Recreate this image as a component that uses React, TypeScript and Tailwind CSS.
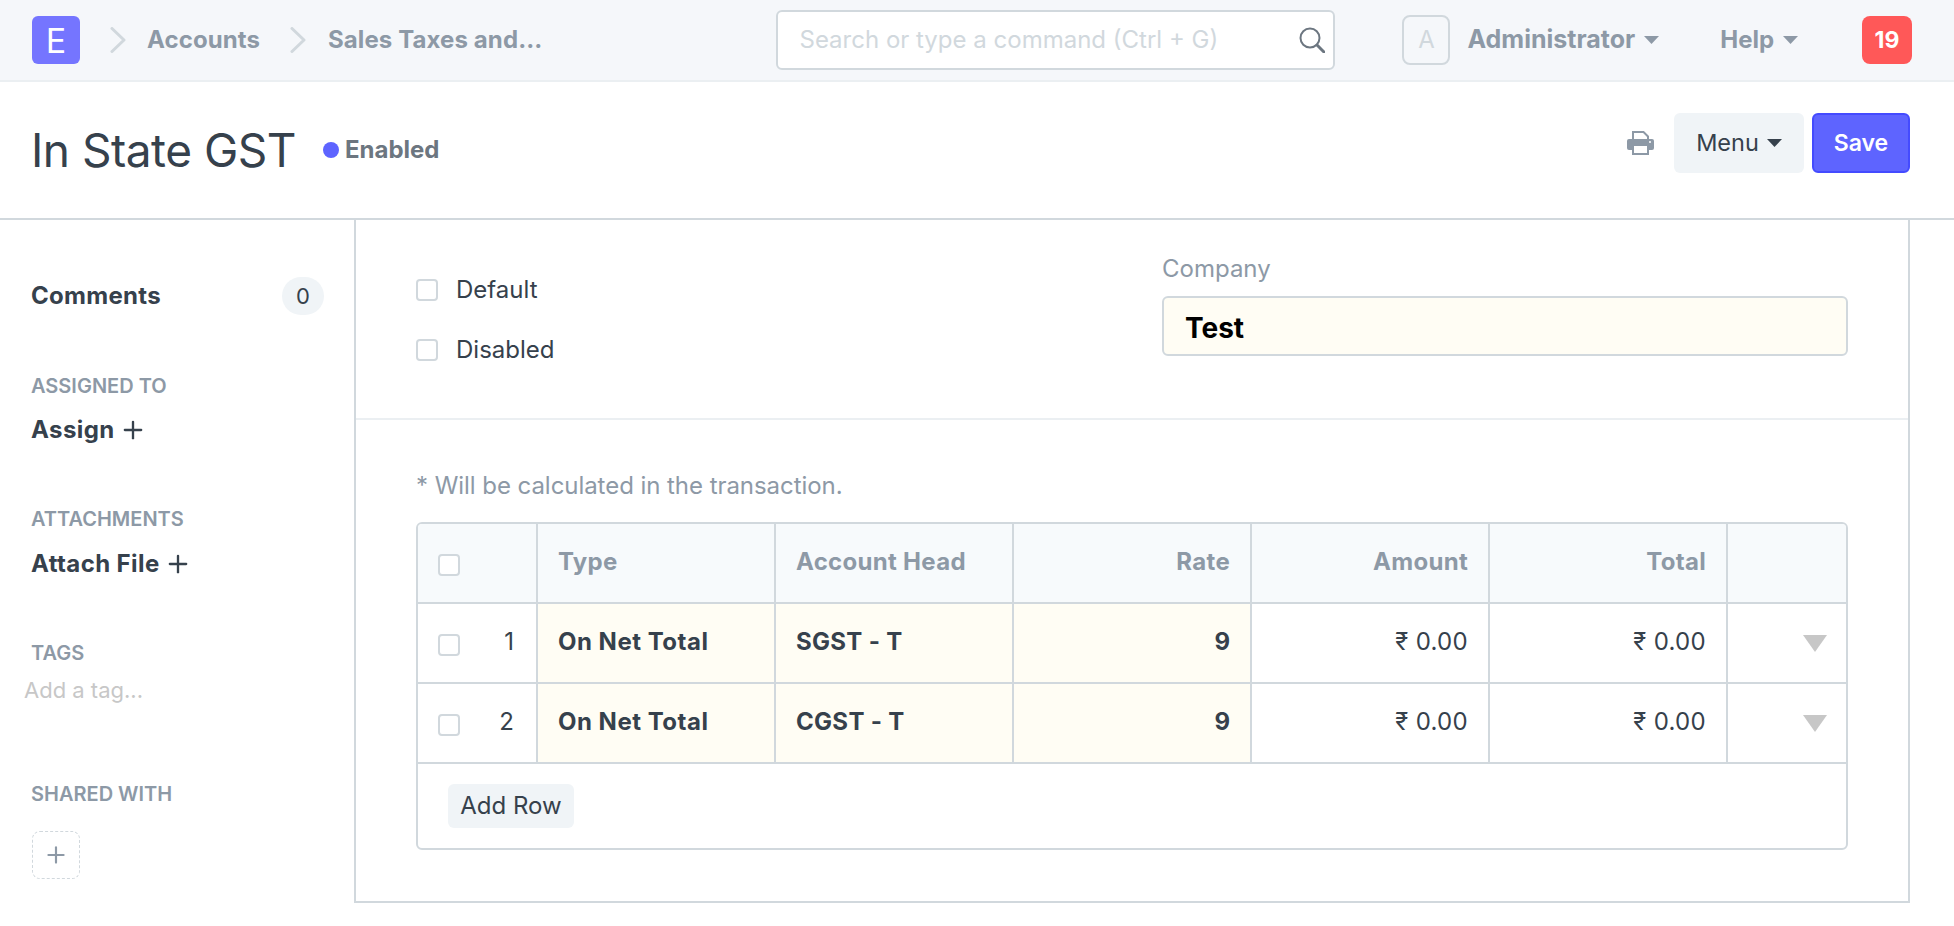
import React from 'react';
import { Plus } from 'lucide-react';

const Chevron = () => (
  <svg width="16" height="26" viewBox="0 0 16 26" fill="none" className="shrink-0">
    <path d="M2 1.5 L14 13 L2 24.5" stroke="#d1d8dd" strokeWidth="3" strokeLinecap="round" strokeLinejoin="round" />
  </svg>
);

const Caret = ({ className }: { className: string }) => (
  <svg width="15" height="8" viewBox="0 0 15 8" className={className}>
    <path d="M0 0 H15 L7.5 8 Z" fill="currentColor" />
  </svg>
);

const SearchIcon = () => (
  <svg width="26" height="26" viewBox="0 0 26 26" fill="none" className="shrink-0">
    <circle cx="11" cy="11" r="9.5" stroke="#6c7680" strokeWidth="2" />
    <path d="M18 18 L25 25" stroke="#6c7680" strokeWidth="3" strokeLinecap="round" />
  </svg>
);

const PrintIcon = () => (
  <svg width="27" height="24" viewBox="0 0 27 24" className="shrink-0 ml-auto">
    <path d="M6 10 V1 H16.5 L21 5.5 V10" fill="#fff" stroke="#8d99a6" strokeWidth="2" />
    <rect x="0" y="8" width="27" height="11" rx="2" fill="#8d99a6" />
    <rect x="6" y="14" width="15" height="9" fill="#fff" stroke="#8d99a6" strokeWidth="2" />
    <circle cx="23" cy="11" r="1" fill="#fff" />
  </svg>
);

const Checkbox = ({ className = '' }: { className?: string }) => (
  <span className={`block w-[22px] h-[22px] rounded-[4px] border-2 border-[#d1d8dd] bg-white shrink-0 ${className}`} />
);

const SideLabel = ({ children, className = '' }: { children: React.ReactNode; className?: string }) => (
  <div className={`-ml-px text-[20px] leading-[24px] font-semibold text-[#8d99a6] ${className}`}>{children}</div>
);

const SideAction = ({ label, className = '' }: { label: string; className?: string }) => (
  <div className={`-ml-px flex items-center gap-[4px] text-[24px] leading-[30px] font-bold tracking-[0.4px] text-[#36414c] ${className}`}>
    {label}
    <Plus size={28} strokeWidth={2} />
  </div>
);

const Navbar = () => (
  <header className="h-[82px] bg-[#f5f7fa] border-b-2 border-[#ebeff2] flex items-center pl-8 pr-[42px]">
    <div className="w-12 h-12 rounded-[6px] bg-[#7575ff] text-white text-[34px] flex items-center justify-center font-normal shrink-0">E</div>
    <div className="ml-[30px]"><Chevron /></div>
    <span className="ml-[21px] w-[143px] text-[24px] font-bold tracking-[0.1px] text-[#8d99a6]">Accounts</span>
    <Chevron />
    <span className="ml-[22px] text-[24px] font-bold tracking-[0.1px] text-[#8d99a6]">Sales Taxes and...</span>
    <div className="ml-[234px] w-[559px] h-[60px] bg-white border-2 border-[#d1d8dd] rounded-[6px] flex items-center justify-between pl-[21px] pr-[8px]">
      <span className="text-[24px] text-[#d1d8dd]">Search or type a command (Ctrl + G)</span>
      <SearchIcon />
    </div>
    <div className="ml-[67px] w-[48px] h-[50px] rounded-[8px] border-2 border-[#d1d8dd] text-[#d1d8dd] text-[24px] flex items-center justify-center">A</div>
    <span className="ml-[17px] text-[25px] font-bold text-[#8d99a6]">Administrator</span>
    <Caret className="ml-[9px] text-[#8d99a6]" />
    <span className="ml-[61px] text-[24px] font-bold text-[#8d99a6]">Help</span>
    <Caret className="ml-[9px] text-[#8d99a6]" />
    <div className="ml-auto w-[50px] h-[48px] rounded-[8px] bg-[#ff5858] text-white text-[23px] font-bold flex items-center justify-center">19</div>
  </header>
);

const PageHead = () => (
  <div className="h-[138px] border-b-2 border-[#d1d8dd] flex items-center pl-8 pr-[44px]">
    <h1 className="-ml-px text-[46px] leading-none font-normal tracking-[-0.5px] text-[#36414c]">In State GST</h1>
    <span className="ml-[27px] w-4 h-4 rounded-full bg-[#5e64ff]" />
    <span className="ml-[6px] text-[24px] font-bold text-[#6c7680]">Enabled</span>
    <div className="ml-auto mb-[14px] flex items-center">
      <PrintIcon />
      <button className="ml-[20px] w-[130px] h-[60px] bg-[#f0f4f7] rounded-[6px] text-[23.5px] text-[#36414c] flex items-center justify-center gap-[8px]">
        Menu
        <Caret className="text-[#36414c]" />
      </button>
      <button className="ml-[8px] w-[98px] h-[60px] bg-[#5e64ff] border-2 border-[#444bff] rounded-[6px] text-[23px] font-semibold text-white">Save</button>
    </div>
  </div>
);

const Sidebar = () => (
  <aside className="w-[354px] shrink-0 pl-8 pr-[30px] pt-[56px]">
    <div className="h-10 flex items-center justify-between">
      <span className="-ml-px text-[24px] font-bold tracking-[0.3px] text-[#36414c]">Comments</span>
      <span className="w-[42px] h-[38px] rounded-full bg-[#f0f4f7] text-[22px] text-[#36414c] flex items-center justify-center">0</span>
    </div>
    <SideLabel className="mt-[58px]">ASSIGNED TO</SideLabel>
    <SideAction label="Assign" className="mt-[17px]" />
    <SideLabel className="mt-[62px]">ATTACHMENTS</SideLabel>
    <SideAction label="Attach File" className="mt-[18px]" />
    <SideLabel className="mt-[62px]">TAGS</SideLabel>
    <div className="-ml-2 mt-[11px] text-[22px] leading-[28px] text-[#c7c7c7]">Add a tag...</div>
    <SideLabel className="mt-[78px]">SHARED WITH</SideLabel>
    <div className="mt-[25px] w-12 h-12 rounded-[8px] border border-dashed border-[#d1d8dd] text-[#8d99a6] flex items-center justify-center">
      <Plus size={26} strokeWidth={2} />
    </div>
  </aside>
);

const rows = [
  { no: 1, account: 'SGST - T' },
  { no: 2, account: 'CGST - T' },
];

const cell = 'w-[238px] shrink-0 border-r-2 border-[#d1d8dd] flex items-center px-[20px]';

const TaxTable = () => (
  <div className="mt-[22px] border-2 border-[#d1d8dd] rounded-[6px] overflow-hidden">
    <div className="h-[80px] flex bg-[#f7fafc] border-b-2 border-[#d1d8dd] text-[24px] font-bold tracking-[0.3px] text-[#8d99a6]">
      <div className="w-[120px] shrink-0 border-r-2 border-[#d1d8dd] flex items-center pl-5">
        <Checkbox className="bg-transparent mt-1" />
      </div>
      <div className={`${cell} pb-[2px]`}>Type</div>
      <div className={`${cell} pb-[2px]`}>Account Head</div>
      <div className={`${cell} pb-[2px] justify-end`}>Rate</div>
      <div className={`${cell} pb-[2px] justify-end`}>Amount</div>
      <div className={`${cell} pb-[2px] justify-end`}>Total</div>
      <div className="flex-1" />
    </div>
    {rows.map((r) => (
      <div key={r.no} className="h-[80px] flex border-b-2 border-[#d1d8dd] text-[24px] text-[#36414c]">
        <div className="w-[120px] shrink-0 border-r-2 border-[#d1d8dd] flex items-center justify-between pl-5 pr-[22px]">
          <Checkbox className="mt-1" />
          <span className="pb-[2px]">{r.no}</span>
        </div>
        <div className={`${cell} pb-[2px] bg-[#fffdf4] font-bold tracking-[0.5px]`}>On Net Total</div>
        <div className={`${cell} pb-[2px] bg-[#fffdf4] font-bold tracking-[0.3px]`}>{r.account}</div>
        <div className={`${cell} pb-[2px] bg-[#fffdf4] font-bold justify-end`}>9</div>
        <div className={`${cell} pb-[2px] justify-end tracking-[0.3px]`}>₹ 0.00</div>
        <div className={`${cell} pb-[2px] justify-end tracking-[0.3px]`}>₹ 0.00</div>
        <div className="flex-1 flex items-center justify-end pr-[19px]">
          <svg width="24" height="17" viewBox="0 0 24 17"><path d="M0 0 H24 L12 17 Z" fill="#c7c7c7" /></svg>
        </div>
      </div>
    ))}
    <div className="h-[84px] pl-[30px] pt-[20px]">
      <button className="w-[126px] h-[44px] bg-[#f0f4f7] rounded-[6px] text-[24px] text-[#36414c]">Add Row</button>
    </div>
  </div>
);

const FormPanel = () => (
  <main className="w-[1556px] h-[683px] border-x-2 border-b-2 border-[#d1d8dd]">
    <div className="h-[200px] border-b-2 border-[#ebeff2] grid grid-cols-[1fr_686px] pl-[60px] pr-[60px]">
      <div className="pt-[59px] flex flex-col gap-[38px]">
        <label className="flex items-center gap-[18px] h-[22px] text-[24px] text-[#36414c]"><Checkbox />Default</label>
        <label className="flex items-center gap-[18px] h-[22px] text-[24px] text-[#36414c]"><Checkbox />Disabled</label>
      </div>
      <div className="pt-[34px]">
        <div className="text-[24px] leading-[30px] text-[#8d99a6]">Company</div>
        <div className="mt-[12px] h-[60px] rounded-[6px] border-2 border-[#d1d8dd] bg-[#fffdf4] flex items-center pl-[21px] pt-1 text-[28px] font-bold text-black">Test</div>
      </div>
    </div>
    <div className="px-[60px] pt-[51px]">
      <div className="text-[24px] leading-[30px] tracking-[-0.05px] text-[#8d99a6]">* Will be calculated in the transaction.</div>
      <div className="-mt-px">
        <TaxTable />
      </div>
    </div>
  </main>
);

export default function App() {
  return (
    <div className="min-h-[926px] bg-white font-['Inter',sans-serif]">
      <Navbar />
      <PageHead />
      <div className="flex">
        <Sidebar />
        <FormPanel />
      </div>
    </div>
  );
}
